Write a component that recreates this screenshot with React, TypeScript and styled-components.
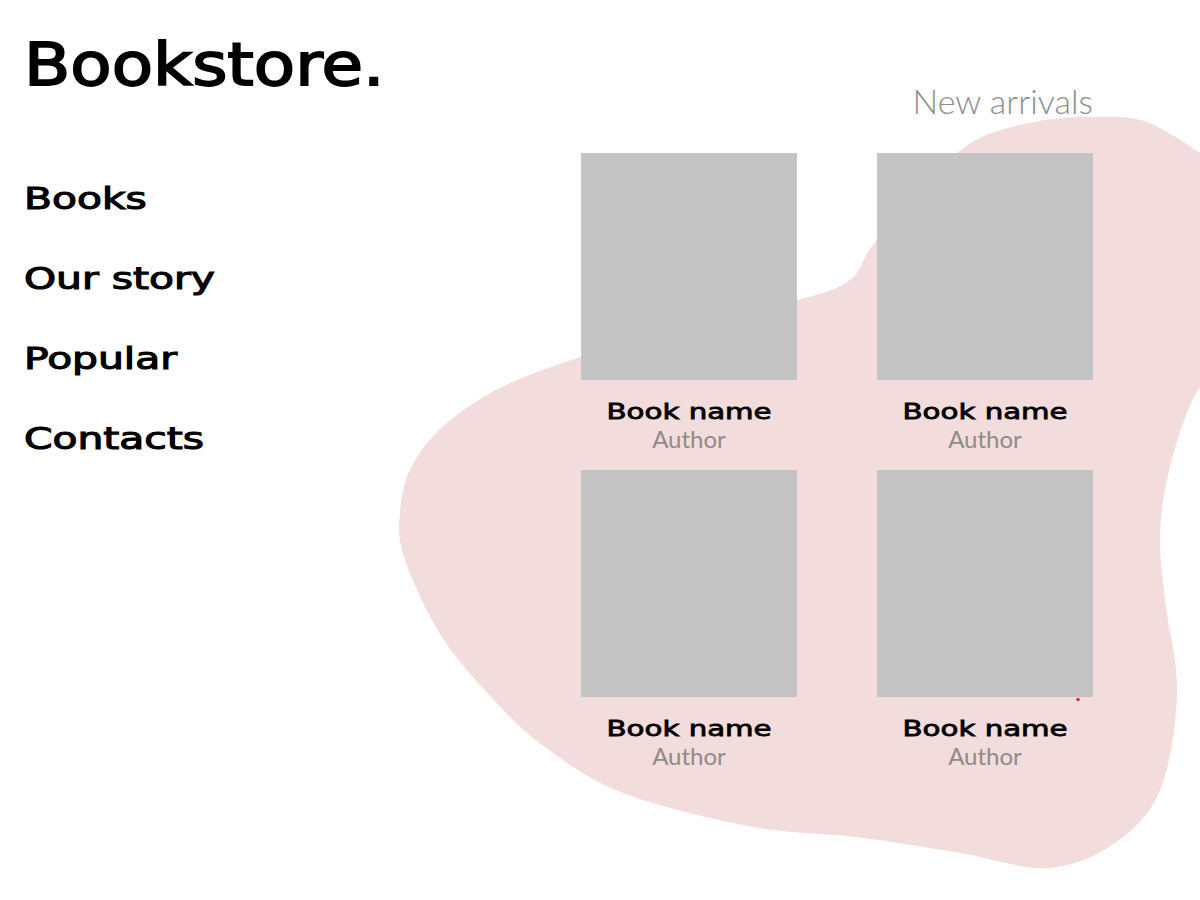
import React from "react";
import styled, { createGlobalStyle, css } from "styled-components";

const GlobalStyle = createGlobalStyle`
  html, body { margin: 0; padding: 0; background: #ffffff; }
  body { font-family: "DejaVu Sans", sans-serif; color: #000; }
  * { box-sizing: border-box; }
`;

const displayFont = css<{ $stroke?: number }>`
  font-family: "DejaVu Sans", sans-serif;
  font-weight: 400;
  color: #000;
  white-space: nowrap;
  -webkit-text-stroke: ${(p) => p.$stroke ?? 0.8}px #000;
`;

const Page = styled.div`
  position: relative;
  width: 1200px;
  height: 900px;
  overflow: hidden;
  display: flex;
  align-items: flex-start;
`;

const Backdrop = styled.svg`
  position: absolute;
  left: 0;
  top: 0;
  width: 1200px;
  height: 900px;
  z-index: 0;
`;

const Sidebar = styled.aside`
  position: relative;
  z-index: 1;
  padding: 36px 0 0 24px;
  display: flex;
  flex-direction: column;
`;

const Logo = styled.h1`
  ${displayFont};
  margin: 0;
  display: inline-block;
  align-self: flex-start;
  font-size: 58px;
  line-height: 58px;
  transform: scaleX(1.165);
  transform-origin: left center;
`;

const Nav = styled.ul`
  list-style: none;
  margin: 65px 0 0;
  padding: 0;
  display: flex;
  flex-direction: column;
  align-items: flex-start;
`;

const NavItem = styled.li`
  height: 80px;
  line-height: 80px;
`;

const NavLink = styled.a`
  ${displayFont};
  display: inline-block;
  font-size: 30px;
  line-height: 80px;
  text-decoration: none;
  transform: scaleX(1.36);
  transform-origin: left center;
`;

const Main = styled.main`
  position: relative;
  z-index: 1;
  margin-left: auto;
  margin-right: 107px;
  width: 512px;
  padding-top: 81px;
  display: flex;
  flex-direction: column;
`;

const SectionTitle = styled.h2`
  margin: 0;
  text-align: right;
  font: 300 34px/1.2 "Lato", sans-serif;
  color: #8d8d8d;
`;

const Grid = styled.div`
  margin-top: 31px;
  display: grid;
  grid-template-columns: 216px 216px;
  column-gap: 80px;
  row-gap: 17px;
`;

const Card = styled.article`
  display: flex;
  flex-direction: column;
  align-items: center;
`;

const Cover = styled.div`
  width: 216px;
  height: 227px;
  background: #c4c4c4;
`;

const BookTitle = styled.h3`
  ${displayFont};
  margin: 19px 0 0;
  display: inline-block;
  font-size: 22px;
  line-height: 26px;
  transform: scaleX(1.33);
  transform-origin: center;
`;

const BookAuthor = styled.p`
  margin: 0;
  font: 400 24px/28px "Lato", sans-serif;
  color: #8f8b8b;
`;

type Pt = [number, number];

const blobPoints: Pt[] = [
  [1093, 117], [1160, 128], [1240, 200], [1240, 330], [1195, 395],
  [1170, 467], [1160, 533], [1165, 600], [1177, 693], [1160, 790],
  [1115, 843], [1048, 868], [960, 853], [856, 837], [753, 827],
  [623, 793], [545, 747], [494, 700], [442, 637], [405, 560],
  [400, 512], [414, 462], [458, 414], [537, 372], [700, 322],
  [798, 300], [850, 280], [877, 240], [957, 153], [1020, 125],
];

function smoothPath(pts: Pt[]): string {
  const n = pts.length;
  let d = `M${pts[0][0]},${pts[0][1]}`;
  for (let i = 0; i < n; i++) {
    const p0 = pts[(i - 1 + n) % n];
    const p1 = pts[i];
    const p2 = pts[(i + 1) % n];
    const p3 = pts[(i + 2) % n];
    const c1 = [p1[0] + (p2[0] - p0[0]) / 6, p1[1] + (p2[1] - p0[1]) / 6];
    const c2 = [p2[0] - (p3[0] - p1[0]) / 6, p2[1] - (p3[1] - p1[1]) / 6];
    d += ` C${c1[0].toFixed(1)},${c1[1].toFixed(1)} ${c2[0].toFixed(1)},${c2[1].toFixed(1)} ${p2[0]},${p2[1]}`;
  }
  return d + " Z";
}

const navItems = ["Books", "Our story", "Popular", "Contacts"];
const books = [0, 1, 2, 3];

export default function App() {
  return (
    <>
      <GlobalStyle />
      <Page>
        <Backdrop viewBox="0 0 1200 900" aria-hidden="true">
          <path d={smoothPath(blobPoints)} fill="#f2dcdc" />
          <circle cx="1078" cy="699.5" r="1.8" fill="#e8212b" />
        </Backdrop>
        <Sidebar>
          <Logo $stroke={1.8}>Bookstore.</Logo>
          <Nav>
            {navItems.map((item) => (
              <NavItem key={item}>
                <NavLink href="#" $stroke={1.1}>{item}</NavLink>
              </NavItem>
            ))}
          </Nav>
        </Sidebar>
        <Main>
          <SectionTitle>New arrivals</SectionTitle>
          <Grid>
            {books.map((b) => (
              <Card key={b}>
                <Cover />
                <BookTitle $stroke={0.8}>Book name</BookTitle>
                <BookAuthor>Author</BookAuthor>
              </Card>
            ))}
          </Grid>
        </Main>
      </Page>
    </>
  );
}
